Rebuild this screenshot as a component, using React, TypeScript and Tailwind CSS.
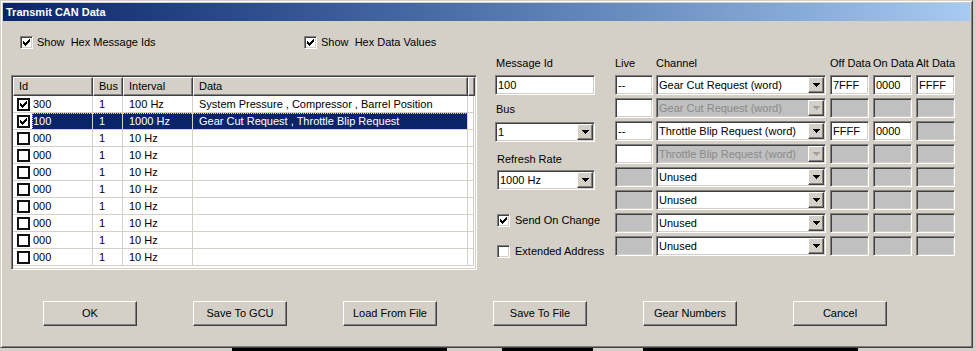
import React from 'react';

const sunken =
  'border border-t-[#808080] border-l-[#808080] border-b-white border-r-white shadow-[inset_1px_1px_0_#404040,inset_-1px_-1px_0_#d4d0c8]';
const raised =
  'border border-t-white border-l-white border-b-[#404040] border-r-[#404040] shadow-[inset_-1px_-1px_0_#808080,inset_1px_1px_0_#d4d0c8]';

const CheckMark = () => (
  <svg width="7" height="7" viewBox="0 0 7 7" shapeRendering="crispEdges" className="block">
    <path d="M0 2h1v3H0zM1 3h1v3H1zM2 4h1v3H2zM3 3h1v3H3zM4 2h1v3H4zM5 1h1v3H5zM6 0h1v3H6z" fill="#000" />
  </svg>
);

const Arrow = ({ disabled }: { disabled?: boolean }) => (
  <svg width="7" height="4" viewBox="0 0 7 4" shapeRendering="crispEdges" className="block">
    <path d="M0 0h7v1H0zM1 1h5v1H1zM2 2h3v1H2zM3 3h1v1H3z" fill={disabled ? '#a0a0a0' : '#000'} />
  </svg>
);

const Box3D = ({ checked }: { checked?: boolean }) => (
  <span className={`flex h-[13px] w-[13px] shrink-0 items-center justify-center bg-white ${sunken}`}>
    {checked && <CheckMark />}
  </span>
);

const FlatBox = ({ checked }: { checked?: boolean }) => (
  <span className="flex h-[13px] w-[13px] shrink-0 items-center justify-center border-2 border-[#111] bg-white">
    {checked && <CheckMark />}
  </span>
);

const Edit = ({ value, enabled = true, className = '' }: { value?: string; enabled?: boolean; className?: string }) => (
  <div className={`flex h-[20px] items-center pl-[2px] ${sunken} ${enabled ? 'bg-white' : 'bg-[#c0c0c0]'} ${className}`}>
    {value}
  </div>
);

const Combo = ({ value, enabled = true, className = '' }: { value: string; enabled?: boolean; className?: string }) => (
  <div
    className={`flex h-[20px] items-center ${sunken} ${enabled ? 'bg-white text-black' : 'bg-[#c0c0c0] text-[#8a8a8a]'} ${className}`}
  >
    <span className="flex-1 truncate pl-[2px]">{value}</span>
    <span className={`mr-px flex h-[16px] w-[16px] shrink-0 items-center justify-center bg-[#d4d0c8] ${raised}`}>
      <Arrow disabled={!enabled} />
    </span>
  </div>
);

const messages = [
  { checked: true, id: '300', bus: '1', interval: '100 Hz', data: 'System Pressure , Compressor , Barrel Position' },
  { checked: true, id: '100', bus: '1', interval: '1000 Hz', data: 'Gear Cut Request , Throttle Blip Request', selected: true },
  ...Array.from({ length: 8 }, () => ({ checked: false, id: '000', bus: '1', interval: '10 Hz', data: '' })),
];

type ChannelRow = {
  live?: string;
  liveOn: boolean;
  channel: string;
  channelOn: boolean;
  off?: string;
  on?: string;
  alt?: string;
};

const channels: ChannelRow[] = [
  { live: '--', liveOn: true, channel: 'Gear Cut Request (word)', channelOn: true, off: '7FFF', on: '0000', alt: 'FFFF' },
  { liveOn: true, channel: 'Gear Cut Request (word)', channelOn: false },
  { live: '--', liveOn: true, channel: 'Throttle Blip Request (word)', channelOn: true, off: 'FFFF', on: '0000' },
  { liveOn: true, channel: 'Throttle Blip Request (word)', channelOn: false },
  { liveOn: false, channel: 'Unused', channelOn: true },
  { liveOn: false, channel: 'Unused', channelOn: true },
  { liveOn: false, channel: 'Unused', channelOn: true },
  { liveOn: false, channel: 'Unused', channelOn: true },
];

const buttons = ['OK', 'Save To GCU', 'Load From File', 'Save To File', 'Gear Numbers', 'Cancel'];

const MessageList = () => (
  <div className={`ml-[8px] mt-[18px] flex h-[195px] w-[466px] flex-col bg-white p-px ${sunken}`}>
    <div className="flex h-[19px]">
      <div className={`flex w-[80px] items-center bg-[#d4d0c8] pl-[5px] ${raised}`}>Id</div>
      <div className={`flex w-[30px] items-center bg-[#d4d0c8] pl-[5px] ${raised}`}>Bus</div>
      <div className={`flex w-[70px] items-center bg-[#d4d0c8] pl-[5px] ${raised}`}>Interval</div>
      <div className={`flex w-[275px] items-center bg-[#d4d0c8] pl-[5px] ${raised}`}>Data</div>
      <div className={`w-[7px] bg-[#d4d0c8] ${raised}`} />
    </div>
    {messages.map((m, i) => (
      <div key={i} className="flex h-[17px]">
        <div className="flex w-[19px] items-center border-b border-[#d4d0c8] pl-[4px]">
          <FlatBox checked={m.checked} />
        </div>
        <div
          className={`flex w-[436px] ${
            m.selected ? 'bg-[#0a246a] text-white outline-1 -outline-offset-1 outline-dotted outline-[#e6d894]' : ''
          }`}
        >
          <div className="flex w-[61px] items-center border-r border-b border-[#d4d0c8] pl-px">{m.id}</div>
          <div className="flex w-[30px] items-center border-r border-b border-[#d4d0c8] pl-[6px]">{m.bus}</div>
          <div className="flex w-[70px] items-center border-r border-b border-[#d4d0c8] pl-[6px]">{m.interval}</div>
          <div className="flex w-[275px] items-center border-r border-b border-[#d4d0c8] pl-[6px] whitespace-nowrap">
            {m.data}
          </div>
        </div>
        <div className="w-[6px] border-r border-b border-[#d4d0c8]" />
      </div>
    ))}
  </div>
);

const MessageSettings = () => (
  <div className="ml-[18px] flex w-[110px] flex-col">
    <div className="h-[13px] pl-px">Message Id</div>
    <Edit value="100" className="mt-[5px] w-[100px]" />
    <div className="mt-[8px] h-[13px] pl-px">Bus</div>
    <Combo value="1" className="mt-[6px] w-[100px]" />
    <div className="mt-[11px] h-[13px] pl-[2px]">Refresh Rate</div>
    <Combo value="1000 Hz" className="mt-[4px] ml-[2px] w-[98px]" />
    <label className="mt-[24px] ml-[2px] flex items-center gap-[5px]">
      <Box3D checked />
      <span>Send On Change</span>
    </label>
    <label className="mt-[18px] ml-[2px] flex items-center gap-[5px]">
      <Box3D />
      <span className="whitespace-nowrap">Extended Address</span>
    </label>
  </div>
);

const ChannelGrid = () => (
  <div className="ml-[10px] flex flex-col">
    <div className="flex h-[13px] whitespace-nowrap">
      <div className="w-[41px]">Live</div>
      <div className="w-[174px]">Channel</div>
      <div className="w-[43px]">Off Data</div>
      <div className="w-[43px]">On Data</div>
      <div>Alt Data</div>
    </div>
    <div className="mt-[5px] flex flex-col gap-[3px]">
      {channels.map((c, i) => (
        <div key={i} className="flex">
          <Edit value={c.live} enabled={c.liveOn} className="w-[38px]" />
          <Combo value={c.channel} enabled={c.channelOn} className="ml-[3px] w-[170px]" />
          <Edit value={c.off} enabled={!!c.off} className="ml-[4px] w-[39px]" />
          <Edit value={c.on} enabled={!!c.on} className="ml-[4px] w-[39px]" />
          <Edit value={c.alt} enabled={!!c.alt} className="ml-[4px] w-[39px]" />
        </div>
      ))}
    </div>
  </div>
);

export default function App() {
  return (
    <div className="flex h-[351px] w-[976px] flex-col overflow-hidden bg-[#d4d0c8] font-['Liberation_Sans',Arial,sans-serif] text-[11px] leading-[13px] text-black">
      <div className="flex h-[348px] w-[973px] flex-col border border-t-[#d4d0c8] border-l-[#d4d0c8] border-b-[#404040] border-r-[#404040] p-[2px] shadow-[inset_1px_1px_0_#fff,inset_-1px_-1px_0_#808080]">
        <div className="flex h-[18px] items-center bg-linear-to-r from-[#0a246a] to-[#a6caf0] pl-[3px] font-bold text-white">
          Transmit CAN Data
        </div>

        <div className="flex h-[28px] items-end">
          <label className="ml-[17px] flex w-[284px] items-center gap-[4px]">
            <Box3D checked />
            <span className="whitespace-pre">Show  Hex Message Ids</span>
          </label>
          <label className="flex items-center gap-[4px]">
            <Box3D checked />
            <span className="whitespace-pre">Show  Hex Data Values</span>
          </label>
        </div>

        <div className="mt-[8px] flex items-start">
          <MessageList />
          <MessageSettings />
          <ChannelGrid />
        </div>

        <div className="mt-[31px] ml-[40px] flex gap-[56px]">
          {buttons.map((b) => (
            <button key={b} className={`flex h-[25px] w-[94px] items-center justify-center bg-[#d4d0c8] ${raised}`}>
              {b}
            </button>
          ))}
        </div>
      </div>
      <div className="flex h-[3px]">
        <div className="ml-[232px] w-[215px] bg-black" />
        <div className="ml-[55px] w-[91px] bg-black" />
        <div className="ml-[50px] w-[215px] bg-black" />
      </div>
    </div>
  );
}
